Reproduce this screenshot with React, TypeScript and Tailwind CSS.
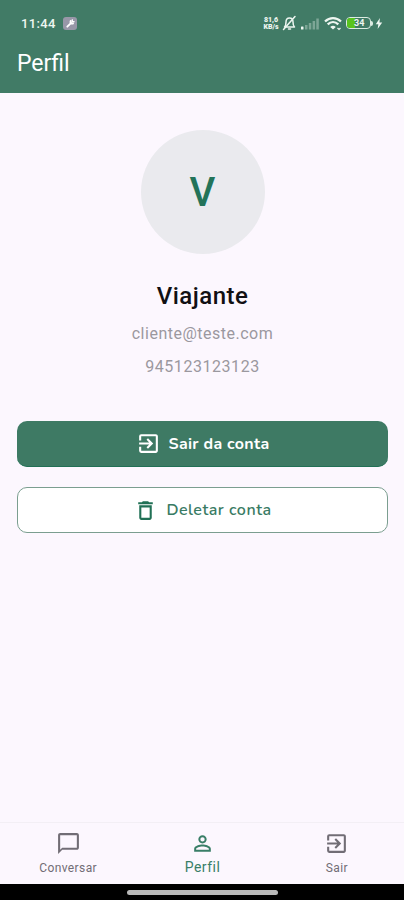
import type { ReactNode } from 'react';
import { MdChatBubbleOutline, MdDeleteOutline, MdExitToApp, MdPersonOutline } from 'react-icons/md';

const user = {
  name: 'Viajante',
  email: 'cliente@teste.com',
  phone: '945123123123',
};

function StatusBar() {
  return (
    <div className="flex h-[46px] items-center pl-[21px] pr-[21px] text-[#eef6f1]">
      <span className="w-[36px] whitespace-nowrap pt-px text-[13px] font-medium leading-4 tracking-[0.35px]">11:44</span>
      <span className="ml-[6px] flex h-[13px] w-[14px] items-center justify-center rounded-[3px] bg-[#9897a8]">
        <svg className="h-[11px] w-[11px]" viewBox="0 0 12 12" fill="none" stroke="#fff" strokeWidth="2" strokeLinecap="round">
          <path d="M2.5 9.5L6.5 5.5" />
          <path d="M6 3a2.2 2.2 0 0 0 3 3M8 2.2L7.6 4.2 9.8 4" strokeWidth="1.6" />
        </svg>
      </span>

      <div className="ml-auto flex items-center">
        <span className="flex w-[16px] flex-col items-center whitespace-nowrap pt-px text-[7px] font-black leading-[7px]">
          <span>81,6</span>
          <span>KB/s</span>
        </span>
        {/* Muted bell */}
        <svg className="ml-[3px] h-[16px] w-[15px]" viewBox="0 0 15 16" fill="none" stroke="currentColor" strokeWidth="1.5" strokeLinecap="round" strokeLinejoin="round">
          <path d="M2.5 12h10c-1.3-1.2-1.5-2.4-1.5-5 0-2.5-1.3-4-3.5-4S4 4.5 4 7c0 2.6-.2 3.8-1.5 5z" />
          <path d="M6.5 14h2M13 1.5L1.5 14.5" />
        </svg>
        {/* Signal */}
        <svg className="ml-[4px] h-[13px] w-[18px]" viewBox="0 0 18 13" fill="currentColor">
          <rect x="0" y="9.5" width="2.5" height="3" rx=".5" />
          <g opacity=".35">
            <rect x="4" y="8" width="2.5" height="4.5" />
            <rect x="7.8" y="6" width="2.5" height="6.5" />
            <rect x="11.6" y="4" width="2.5" height="8.5" />
            <rect x="15.3" y="1.5" width="2.5" height="11" />
          </g>
        </svg>
        {/* Wifi */}
        <svg className="ml-[5px] h-[15px] w-[18px]" viewBox="0 0 18 15" fill="none" stroke="currentColor" strokeWidth="2.3">
          <path d="M1 5.5c4.8-4.5 11.2-4.5 16 0" />
          <path d="M3.7 8.3c3.2-3 7.4-3 10.6 0" />
          <path d="M6.2 10.9c1.7-1.6 3.9-1.6 5.6 0L9 13.5z" fill="currentColor" stroke="none" />
          <path d="M13.5 12l1.500 1.500 1.500-1.500" strokeWidth="1.2" />
        </svg>
        {/* Battery */}
        <span className="ml-[4px] flex h-[12px] w-[25px] overflow-hidden rounded-[4px] border-[1.5px] border-[#dcebe2] text-[9px] font-bold leading-[11px]">
          <span className="h-full w-[8px] bg-[#59c31e]" />
          <span className="-ml-px">34</span>
        </span>
        <span className="h-[5px] w-[2px] rounded-r-sm bg-[#dcebe2]" />
        <svg className="ml-[2px] h-[11px] w-[8px]" viewBox="0 0 8 12" fill="currentColor">
          <path d="M5 0L.5 6.7h2.8L2.5 12 7.5 4.9H4.5z" />
        </svg>
      </div>
    </div>
  );
}

function NavItem({ icon, label, active = false }: { icon: ReactNode; label: string; active?: boolean }) {
  return (
    <button
      className={`flex flex-1 flex-col items-center whitespace-nowrap pt-[8px] ${
        active ? 'text-[#397e67]' : 'text-[#716d75]'
      }`}
    >
      {icon}
      <span
        className={
          active
            ? 'mt-[3px] text-[14px] leading-4 tracking-[0.5px]'
            : 'mt-[4px] text-[12px] leading-4 tracking-[0.4px]'
        }
      >
        {label}
      </span>
    </button>
  );
}

export default function App() {
  return (
    <div className="flex h-[900px] w-[404px] flex-col overflow-hidden bg-[#fcf7fe] font-[Roboto,sans-serif]">
      <header className="h-[93px] shrink-0 bg-[#417b66]">
        <StatusBar />
        <h1 className="pl-[17px] text-[23px] leading-[35px] text-white">Perfil</h1>
      </header>

      <main className="flex flex-1 flex-col items-center pl-[17px] pr-[16px] pt-[37px]">
        <div className="flex h-[124px] w-[124px] shrink-0 items-center justify-center rounded-full bg-[#eaeaee] pt-[2px] text-[40px] font-medium text-[#237359]">
          {user.name.charAt(0)}
        </div>
        <h2 className="mt-[26px] text-[24px] font-medium leading-8 tracking-[0.5px] text-[#111013]">{user.name}</h2>
        <p className="mt-[10px] text-[16px] leading-6 tracking-[0.5px] text-[#9b989f]">{user.email}</p>
        <p className="mt-[9px] text-[16px] leading-6 tracking-[0.55px] text-[#9b989f]">{user.phone}</p>

        <button className="mt-[42px] flex h-[46px] w-full items-center justify-center rounded-[10px] border-b border-[#217055] bg-[#3e7a64] font-['Nunito','Open_Sans',sans-serif] text-[16px] font-bold tracking-[0.3px] text-white">
          <MdExitToApp className="mr-[8px] h-[25px] w-[25px]" />
          Sair da conta
        </button>
        <button className="mt-[20px] flex h-[46px] w-full items-center justify-center rounded-[10px] border border-[#7b9e90] bg-white font-['Nunito','Open_Sans',sans-serif] text-[16px] font-semibold tracking-[0.5px] text-[#397b64]">
          <MdDeleteOutline className="mr-[8px] h-[25px] w-[25px] text-[#217055]" />
          Deletar conta
        </button>
      </main>

      <nav className="flex h-[62px] shrink-0 border-t border-[#f3eff5] pl-px">
        <NavItem label="Conversar" icon={<MdChatBubbleOutline className="h-[25px] w-[25px]" />} />
        <NavItem label="Perfil" active icon={<MdPersonOutline className="h-[25px] w-[25px]" />} />
        <NavItem label="Sair" icon={<MdExitToApp className="h-[25px] w-[25px]" />} />
      </nav>

      {/* System gesture bar */}
      <div className="flex h-[16px] shrink-0 justify-center bg-black pt-[6px]">
        <div className="h-[5px] w-[151px] rounded-full bg-[#b9b9b9]" />
      </div>
    </div>
  );
}
